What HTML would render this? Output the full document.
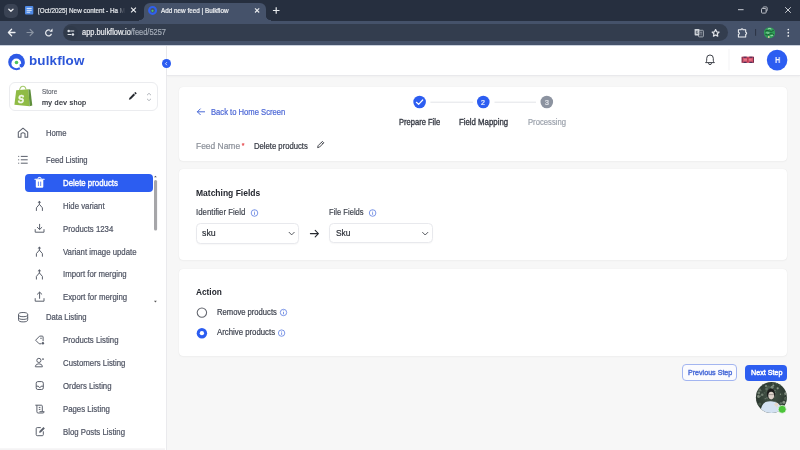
<!DOCTYPE html>
<html><head><meta charset="utf-8">
<style>
*{box-sizing:border-box;margin:0;padding:0}
html,body{width:800px;height:450px;overflow:hidden;background:#fff;font-family:"Liberation Sans",sans-serif}
.abs{position:absolute}
.t{position:absolute;white-space:nowrap;line-height:1;-webkit-font-smoothing:antialiased;will-change:transform}
.card{background:#fff;border-radius:4px;box-shadow:0 0 1px rgba(0,0,0,0.10),0 1px 2px rgba(0,0,0,0.03)}
</style></head><body>
<div class="abs" style="left:0;top:0;width:800px;height:21px;background:#262f3f"></div>
<div class="abs" style="left:4px;top:3.5px;width:14px;height:14px;border-radius:5px;background:#3a4354"></div>
<svg class="abs" style="left:0;top:0" width="800" height="45" viewBox="0 0 800 45"><path d="M8.8 9.2 L10.9 11.2 L13 9.2" fill="none" stroke="#e8eaed" stroke-width="1.3" stroke-linecap="round" stroke-linejoin="round"/><rect x="25" y="6" width="8.3" height="8.6" rx="1" fill="#4f8ae6"/><path d="M26.6 8.4h5.1M26.6 10.3h5.1M26.6 12.2h3.6" stroke="#e6eefc" stroke-width="0.95"/><path d="M131.1 7.6l4.8 4.8M135.9 7.6l-4.8 4.8" stroke="#eceef1" stroke-width="1.15"/></svg>
<div class="abs" style="left:144px;top:3px;width:122px;height:19px;border-radius:6px 6px 0 0;background:#45526a"></div>
<div class="abs" style="left:139px;top:15px;width:5px;height:6px;background:radial-gradient(circle at 0 0,#262f3f 5px,#45526a 5.5px)"></div>
<div class="abs" style="left:266px;top:15px;width:5px;height:6px;background:radial-gradient(circle at 100% 0,#262f3f 5px,#45526a 5.5px)"></div>
<div class="t" style="left:37.50px;top:7.92px;font-size:6.35px;color:#e3e6ea;font-weight:400;transform:scaleY(1.12);transform-origin:0 1px;-webkit-text-stroke:0.2px #e3e6ea"><span style="-webkit-mask-image:linear-gradient(90deg,#000 79px,rgba(0,0,0,0.25) 84px,transparent 88px);display:inline-block">[Oct/2025] New content - Ha M</span></div>

<div class="t" style="left:161.00px;top:7.92px;font-size:6.35px;color:#eef0f3;font-weight:400;transform:scaleY(1.12);transform-origin:0 1px;-webkit-text-stroke:0.2px #eef0f3">Add new feed | Bulkflow</div>

<svg class="abs" style="left:0;top:0" width="800" height="45" viewBox="0 0 800 45"><circle cx="152.6" cy="10.4" r="3.4" fill="none" stroke="#2f60ee" stroke-width="2.2"/><circle cx="152.5" cy="10.8" r="1.1" fill="#4cc86a"/><path d="M255 8.3l4.2 4.2M259.2 8.3l-4.2 4.2" stroke="#e8eaed" stroke-width="1.1"/><path d="M276.2 7.2v6.6M272.9 10.5h6.6" stroke="#e8eaed" stroke-width="1.2"/><path d="M738 9.7h5.6" stroke="#c9cdd4" stroke-width="1"/><rect x="761.5" y="8.5" width="4.6" height="4.6" rx="0.8" fill="none" stroke="#c9cdd4" stroke-width="0.9"/><path d="M763 8.3 v-0.6 a0.8 0.8 0 0 1 0.8-0.8 h2.4 a1 1 0 0 1 1 1 v2.4 a0.8 0.8 0 0 1 -0.8 0.8 h-0.4" fill="none" stroke="#c9cdd4" stroke-width="0.8"/><path d="M785.2 7.2l5.6 5.6M790.8 7.2l-5.6 5.6" stroke="#c9cdd4" stroke-width="1"/></svg>
<div class="abs" style="left:0;top:21px;width:800px;height:24px;background:#45526a"></div>
<div class="abs" style="left:62.5px;top:24.3px;width:665.5px;height:16.5px;border-radius:8.5px;background:#333d4e"></div>
<div class="abs" style="left:63.5px;top:25.5px;width:14px;height:14px;border-radius:7px;background:#303a4a"></div>
<div class="t" style="left:81.80px;top:29.29px;font-size:7.45px;color:#e9ebee;font-weight:400;transform:scaleY(1.1);transform-origin:0 1.2px;-webkit-text-stroke:0.2px #e9ebee">app.bulkflow.io<span style="color:#a3abb7;-webkit-text-stroke:0.2px #a3abb7">/feed/5257</span></div>

<svg class="abs" style="left:0;top:0" width="800" height="45" viewBox="0 0 800 45"><path d="M15 32.5H8.6M11.6 29.3L8.4 32.5L11.6 35.7" fill="none" stroke="#eef0f3" stroke-width="1.3" stroke-linecap="round" stroke-linejoin="round"/><path d="M27 32.5h6.2M30.1 29.4l3.1 3.1l-3.1 3.1" fill="none" stroke="#8a93a2" stroke-width="1.2" stroke-linecap="round" stroke-linejoin="round"/><path d="M50.1 30.3 A3 3 0 1 0 51.5 33.8" fill="none" stroke="#e6e9ee" stroke-width="1.2"/><path d="M49.4 31.7 L52.5 31.7 L52.5 28.6z" fill="#f2f4f7"/><path d="M70.2 31h4M67.6 34.5h3.8" stroke="#dfe3e8" stroke-width="1.1"/><circle cx="68.7" cy="31" r="1.25" fill="#dfe3e8"/><circle cx="72.9" cy="34.5" r="1.25" fill="#dfe3e8"/><rect x="698.4" y="30.3" width="5" height="6.6" rx="0.8" fill="#3a4352" stroke="#a9b0ba" stroke-width="0.9"/><rect x="694.6" y="28.9" width="4.8" height="6.6" rx="0.7" fill="#cfd3d9"/><path d="M697.8 31.2h-1.5v2.2h1.5v-1" fill="none" stroke="#3a4352" stroke-width="0.7"/><path d="M700 32.2h2.2M701.1 32.2v3.2" stroke="#a9b0ba" stroke-width="0.6"/><path d="M715.6 29.6l1.05 2.2 2.4 0.32-1.75 1.65 0.45 2.4-2.15-1.2-2.15 1.2 0.45-2.4-1.75-1.65 2.4-0.32z" fill="#2a3342" stroke="#e0e3e8" stroke-width="1.25" stroke-linejoin="round"/><path d="M738.4 29.8H741A1 1 0 0 1 743 29.8H745.7V32.3A1 1 0 0 1 745.7 34.3V37H738.4V34.3A1 1 0 0 0 738.4 32.3Z" fill="none" stroke="#eef0f3" stroke-width="1.05" stroke-linejoin="round"/><path d="M755.6 29v6.8" stroke="#283040" stroke-width="0.9"/><circle cx="769.5" cy="32.75" r="5.6" fill="#2f9e57"/><path d="M765 31.3q2.2-1.6 4.4-0.3t4.4-0.8M765.3 34.3q2.2 1.4 4.2-0.2t4.3 0.6" fill="none" stroke="#1b5a33" stroke-width="1"/><path d="M767.8 29q1.5-1 3.5 0M766.4 32.7q1.5 0.6 3 0.2M770.5 35.6q1.5 0.4 2.5-0.6" fill="none" stroke="#c8ead0" stroke-width="0.8"/><circle cx="768.8" cy="37" r="0.9" fill="#e8d0a0"/><circle cx="788.3" cy="29.5" r="0.85" fill="#eef0f3"/><circle cx="788.3" cy="32.7" r="0.85" fill="#eef0f3"/><circle cx="788.3" cy="35.9" r="0.85" fill="#eef0f3"/></svg>
<div class="abs" style="left:0;top:45px;width:800px;height:405px;background:#f7f7f7"></div>
<div class="abs" style="left:0;top:45px;width:167px;height:405px;background:#fff;border-right:1px solid #eaeaed"></div>
<div class="abs" style="left:167px;top:45px;width:633px;height:30.9px;background:#fff;border-bottom:1px solid #e9e9ec;box-shadow:0 1px 2px rgba(0,0,0,0.03)"></div>
<div class="abs" style="left:0;top:45px;width:800px;height:1px;background:#c9d0dc"></div>
<div class="abs card" style="left:178.7px;top:87.3px;width:608.6px;height:73.9px"></div>
<div class="abs card" style="left:178.7px;top:169.1px;width:608.6px;height:90.9px"></div>
<div class="abs card" style="left:178.7px;top:269px;width:608.6px;height:86.8px"></div>
<svg class="abs" style="left:0;top:45px" width="166" height="405" viewBox="0 45 166 405"><circle cx="16.5" cy="62" r="8.3" fill="#2e5ae6"/><circle cx="16.3" cy="63.4" r="4.9" fill="#fff"/><path d="M19.2 67.6 L21.6 70.2 L23.6 68.2 L21.2 66.2z" fill="#fff"/><path d="M19.6 64.6 Q22.5 62.8 24.8 62.6 Q24.2 66.2 21.4 67.8 Q19 66.8 19.6 64.6z" fill="#2e5ae6"/><circle cx="16.5" cy="62.5" r="1.8" fill="#4cc35e"/></svg>
<div class="t" style="left:29.40px;top:53.56px;font-size:13.4px;color:#2b55d8;font-weight:700;letter-spacing:0.15px">bulkflow</div>

<div class="abs" style="left:8.5px;top:82.2px;width:149.2px;height:28.6px;border:1px solid #ebecef;border-radius:6px;background:#fff"></div>
<svg class="abs" style="left:0;top:45px" width="166" height="405" viewBox="0 45 166 405"><path d="M16.2 90.2 L28.4 89.2 L29.6 106.3 L14.4 104.7 Z" fill="#8fbb45"/><path d="M28.4 89.2 L30.4 89.6 L32.3 105.6 L29.6 106.3 Z" fill="#5f8f3c"/><path d="M19.6 90.2 q0.6-4 3.4-4 q2.6 0 3 3.6" fill="none" stroke="#a4c96a" stroke-width="1.1"/><text x="0" y="0" transform="translate(17.4 102.8) scale(0.82 1) skewX(-8)" font-family="Liberation Sans" font-weight="700" font-size="11.5" fill="#f4f8ee" stroke="#f4f8ee" stroke-width="0.4">S</text><path d="M128.9 99.8 l0.45-1.9 l4.3-4.3 l1.45 1.45 l-4.3 4.3 z" fill="#262a30"/><path d="M134.2 93.1 l0.8-0.8 q0.35-0.35 0.7 0 l0.75 0.75 q0.35 0.35 0 0.7 l-0.8 0.8z" fill="#262a30"/><path d="M147 95.2 l2-1.9 l2 1.9 M147 98.8 l2 1.9 l2-1.9" fill="none" stroke="#9ea3ab" stroke-width="0.8"/></svg>
<div class="t" style="left:42.00px;top:88.58px;font-size:6.4px;color:#5d616b;font-weight:400;-webkit-text-stroke:0.12px #5d616b;transform:scaleY(1.08);transform-origin:0 1.01px">Store</div>

<div class="t" style="left:42.00px;top:98.62px;font-size:7.3px;color:#2a2e36;font-weight:400;letter-spacing:0.28px;noscale;-webkit-text-stroke:0.2px #2a2e36">my dev shop</div>

<div class="t" style="left:46.00px;top:129.92px;font-size:7.65px;color:#4f5463;font-weight:400;;-webkit-text-stroke:0.2px #4f5463;transform:scaleY(1.08);transform-origin:0 1.21px">Home</div>

<div class="t" style="left:46.00px;top:156.82px;font-size:7.65px;color:#4f5463;font-weight:400;;-webkit-text-stroke:0.2px #4f5463;transform:scaleY(1.08);transform-origin:0 1.21px">Feed Listing</div>

<div class="abs" style="left:24.9px;top:173.6px;width:128.1px;height:18.6px;border-radius:4px;background:#2c5df1"></div>
<div class="t" style="left:62.50px;top:179.95px;font-size:7.85px;color:#fff;font-weight:400;-webkit-text-stroke:0.35px #fff;transform:scaleY(1.08);transform-origin:0 1.24px">Delete products</div>

<div class="t" style="left:62.60px;top:202.80px;font-size:7.8px;color:#4f5463;font-weight:400;;-webkit-text-stroke:0.2px #4f5463;transform:scaleY(1.08);transform-origin:0 1.24px">Hide variant</div>

<div class="t" style="left:62.60px;top:225.65px;font-size:7.8px;color:#4f5463;font-weight:400;;-webkit-text-stroke:0.2px #4f5463;transform:scaleY(1.08);transform-origin:0 1.24px">Products 1234</div>

<div class="t" style="left:62.60px;top:248.50px;font-size:7.8px;color:#4f5463;font-weight:400;;-webkit-text-stroke:0.2px #4f5463;transform:scaleY(1.08);transform-origin:0 1.24px">Variant image update</div>

<div class="t" style="left:62.60px;top:271.35px;font-size:7.8px;color:#4f5463;font-weight:400;;-webkit-text-stroke:0.2px #4f5463;transform:scaleY(1.08);transform-origin:0 1.24px">Import for merging</div>

<div class="t" style="left:62.60px;top:294.20px;font-size:7.8px;color:#4f5463;font-weight:400;;-webkit-text-stroke:0.2px #4f5463;transform:scaleY(1.08);transform-origin:0 1.24px">Export for merging</div>

<div class="t" style="left:46.00px;top:314.38px;font-size:7.7px;color:#4f5463;font-weight:400;;-webkit-text-stroke:0.2px #4f5463;transform:scaleY(1.08);transform-origin:0 1.22px">Data Listing</div>

<div class="t" style="left:62.60px;top:337.30px;font-size:7.8px;color:#4f5463;font-weight:400;;-webkit-text-stroke:0.2px #4f5463;transform:scaleY(1.08);transform-origin:0 1.24px">Products Listing</div>

<div class="t" style="left:62.60px;top:360.20px;font-size:7.8px;color:#4f5463;font-weight:400;;-webkit-text-stroke:0.2px #4f5463;transform:scaleY(1.08);transform-origin:0 1.24px">Customers Listing</div>

<div class="t" style="left:62.60px;top:383.10px;font-size:7.8px;color:#4f5463;font-weight:400;;-webkit-text-stroke:0.2px #4f5463;transform:scaleY(1.08);transform-origin:0 1.24px">Orders Listing</div>

<div class="t" style="left:62.60px;top:406.00px;font-size:7.8px;color:#4f5463;font-weight:400;;-webkit-text-stroke:0.2px #4f5463;transform:scaleY(1.08);transform-origin:0 1.24px">Pages Listing</div>

<div class="t" style="left:62.60px;top:428.90px;font-size:7.8px;color:#4f5463;font-weight:400;;-webkit-text-stroke:0.2px #4f5463;transform:scaleY(1.08);transform-origin:0 1.24px">Blog Posts Listing</div>

<svg class="abs" style="left:0;top:45px" width="166" height="405" viewBox="0 45 166 405"><path d="M18.3 132.2 L23 128.2 L27.7 132.2 V137.3 H25 V133.6 Q23 132 21 133.6 V137.3 H18.3 Z" fill="none" stroke="#5b606c" stroke-width="1.05" stroke-linejoin="round"/><path d="M18.2 156.4h1M18.2 159.8h1M18.2 163.2h1M20.8 156.4h6.9M20.8 159.8h6.9M20.8 163.2h6.9" stroke="#5b606c" stroke-width="1"/><path d="M34.9 179.2h9.3" stroke="#fff" stroke-width="1.1" stroke-linecap="round"/><path d="M38.1 178.9v-0.6q0-0.9 0.9-0.9h1.1q0.9 0 0.9 0.9v0.6" fill="none" stroke="#fff" stroke-width="1"/><path d="M35.8 179.6h7.5v7.2q0 1-1 1h-5.5q-1 0-1-1z" fill="#fff"/><path d="M38.4 181.6v4.4M40.7 181.6v4.4" stroke="#2c5df1" stroke-width="0.75"/><g fill="none" stroke="#5b606c" stroke-width="1" stroke-linecap="round" stroke-linejoin="round"><path d="M39.4 201.6V204.3M36.4 210.5V207.8L39.4 204.3L42.4 207.8V210.5"/></g><path d="M37.6 202.7L39.4 200.7L41.2 202.7z" fill="#5b606c"/><g fill="none" stroke="#5b606c" stroke-width="1" stroke-linecap="round" stroke-linejoin="round"><path d="M39.6 224.3v5M37.4 227.4l2.2 2.1 2.2-2.1M35.2 229.6v2.6h8.8v-2.6"/></g><g fill="none" stroke="#5b606c" stroke-width="1" stroke-linecap="round" stroke-linejoin="round"><path d="M39.4 247.4V250.1M36.4 256.3V253.6L39.4 250.1L42.4 253.6V256.3"/></g><path d="M37.6 248.5L39.4 246.5L41.2 248.5z" fill="#5b606c"/><g fill="none" stroke="#5b606c" stroke-width="1" stroke-linecap="round" stroke-linejoin="round"><path d="M39.4 270.2V272.9M36.4 279.1V276.4L39.4 272.9L42.4 276.4V279.1"/></g><path d="M37.6 271.3L39.4 269.3L41.2 271.3z" fill="#5b606c"/><g fill="none" stroke="#5b606c" stroke-width="1" stroke-linecap="round" stroke-linejoin="round"><path d="M39.6 298.4v-6M37.4 294.2l2.2-2.1 2.2 2.1M35.2 298.6v2.6h8.8v-2.6"/></g><g fill="none" stroke="#5b606c" stroke-width="1"><ellipse cx="23.1" cy="314.6" rx="4.6" ry="2.1"/><path d="M18.5 314.6v5.2q0 2.1 4.6 2.1t4.6-2.1v-5.2M18.5 317.3q0 2.1 4.6 2.1t4.6-2.1"/></g><g fill="none" stroke="#5b606c" stroke-width="1" stroke-linejoin="round"><path d="M43.1 341.2V337q0-0.9-0.9-0.9h-2.6L35.6 340.2l3.6 3.6h2.2"/><circle cx="41" cy="338.2" r="0.35"/></g><circle cx="42.9" cy="343.3" r="1.2" fill="#5b606c"/><g fill="none" stroke="#5b606c" stroke-width="1"><circle cx="38.9" cy="360.4" r="2.1"/><path d="M35.4 366.8v-0.6q0.4-2.4 3.5-2.4t3.5 2.4v0.6z"/></g><circle cx="43" cy="359.1" r="0.9" fill="#5b606c"/><g fill="none" stroke="#5b606c" stroke-width="1" stroke-linejoin="round"><rect x="36.2" y="381.6" width="7.1" height="7.9" rx="1.6"/><path d="M36.2 386.2h2.1q0.5 1.3 1.45 1.3t1.45-1.3h2.1"/></g><g fill="none" stroke="#5b606c" stroke-width="1" stroke-linejoin="round"><path d="M35.3 405.2h6.1q0.9 0 0.9 0.9v5.4M36.9 405.2v6.6q0 1.2 1.2 1.2h4.8q1.1 0 1.3-1.3h-4.7"/><path d="M38.8 407.4h1.6M38.8 409.4h1.6"/></g><g fill="none" stroke="#5b606c" stroke-width="1" stroke-linejoin="round"><path d="M40.8 427.6h-3.6q-1 0-1 1v6.1q0 1 1 1h5.1q1 0 1-1v-3.4"/></g><path d="M39.1 432.8l0.4-1.7 4-4 1.3 1.3-4 4z" fill="#5b606c"/><rect x="154" y="180" width="3.1" height="50.6" rx="1.5" fill="#a6a6a9"/><path d="M154 177.3l1.4-1.6 1.4 1.6z" fill="#555"/><path d="M154 300.8l1.4 1.6 1.4-1.6z" fill="#555"/><rect x="0" y="448.3" width="165" height="1.7" fill="#f4f3f4"/></svg>
<div class="abs" style="left:161.9px;top:59.4px;width:8.8px;height:8.8px;border-radius:50%;background:#2c5df1"></div>
<svg class="abs" style="left:160px;top:57px" width="14" height="14" viewBox="160 57 14 14"><path d="M166.9 62.2l-1.4 1.5 1.4 1.5" fill="none" stroke="#fff" stroke-width="0.8"/></svg>
<svg class="abs" style="left:600px;top:45px" width="200" height="30" viewBox="600 45 200 30"><path d="M705.6 62.6 q1.1-0.6 1.1-2.4 v-1.9 a3.3 3.3 0 0 1 6.6 0 v1.9 q0 1.8 1.1 2.4 z" fill="none" stroke="#3d4048" stroke-width="1.0" stroke-linejoin="round"/><path d="M708.5 63.1 a1.5 1.5 0 0 0 3 0" fill="none" stroke="#3d4048" stroke-width="1"/><path d="M729 49v21.4" stroke="#f0f0f2" stroke-width="0.8"/><rect x="741.7" y="56.6" width="12.3" height="6.3" fill="#d9566e"/><path d="M743.4 57.2h3.3M749.3 57.2h3.3M743.4 62.3h3.3M749.3 62.3h3.3" stroke="#2c2550" stroke-width="1"/><path d="M742.2 57v5.6M753.5 57v5.6" stroke="#6a2a48" stroke-width="0.9"/><path d="M747.85 57.3v5" stroke="#b8344c" stroke-width="1.3"/><path d="M744 59.75h7.6" stroke="#e27a8c" stroke-width="1.6"/><path d="M747.85 58.8v2" stroke="#b02c44" stroke-width="1.3"/><circle cx="777.1" cy="60.1" r="10.3" fill="#2c5df1"/></svg>
<div class="t" style="left:774.50px;top:55.62px;font-size:8.6px;color:#f4f6fd;font-weight:700;transform:scaleX(0.86);transform-origin:0 0">H</div>

<svg class="abs" style="left:180px;top:88px" width="400" height="70" viewBox="180 88 400 70"><path d="M204.6 111.8h-7.2M200.3 108.9l-2.9 2.9 2.9 2.9" fill="none" stroke="#4a6ad6" stroke-width="1" stroke-linecap="round" stroke-linejoin="round"/><path d="M430.4 102.2h42.7M494.5 102.2h41.5" stroke="#e3e4e8" stroke-width="1"/><circle cx="419.6" cy="102.05" r="6.3" fill="#2c5df1"/><path d="M416.4 102.3l2.2 2 4.1-4.3" fill="none" stroke="#fff" stroke-width="1.2" stroke-linecap="round" stroke-linejoin="round"/><circle cx="483.3" cy="102.05" r="6.3" fill="#2c5df1"/><circle cx="546.8" cy="102.05" r="6.3" fill="#8c93a0"/><path d="M317.6 147.6l0.5-1.9 4.3-4.3 1.4 1.4-4.3 4.3z M321.4 142.4l1.4 1.4" fill="none" stroke="#35383f" stroke-width="0.9" stroke-linejoin="round"/></svg>
<div class="t" style="left:481.40px;top:98.77px;font-size:7.0px;color:#eef2fd;font-weight:400;-webkit-text-stroke:0.2px #eef2fd;noscale">2</div>

<div class="t" style="left:545.00px;top:98.77px;font-size:7.0px;color:#e4e7ec;font-weight:400;-webkit-text-stroke:0.2px #e4e7ec;noscale">3</div>

<div class="t" style="left:210.60px;top:108.52px;font-size:7.65px;color:#4d68d6;font-weight:400;;-webkit-text-stroke:0.2px #4d68d6;transform:scaleY(1.08);transform-origin:0 1.21px">Back to Home Screen</div>

<div class="t" style="left:398.80px;top:119.31px;font-size:7.55px;color:#363a44;font-weight:400;-webkit-text-stroke:0.3px #363a44;transform:scaleY(1.08);transform-origin:0 1.20px">Prepare File</div>

<div class="t" style="left:458.90px;top:119.08px;font-size:7.82px;color:#363a44;font-weight:400;-webkit-text-stroke:0.3px #363a44;transform:scaleY(1.08);transform-origin:0 1.24px">Field Mapping</div>

<div class="t" style="left:528.20px;top:119.20px;font-size:7.68px;color:#9ca2ac;font-weight:400;;-webkit-text-stroke:0.2px #9ca2ac;transform:scaleY(1.08);transform-origin:0 1.22px">Processing</div>

<div class="t" style="left:196.20px;top:141.95px;font-size:8.45px;color:#8b9099;font-weight:400;;-webkit-text-stroke:0.2px #8b9099;transform:scaleY(1.08);transform-origin:0 1.34px">Feed Name<span style="color:#e5484d;-webkit-text-stroke:0.2px #e5484d;margin-left:1.6px;font-size:7px;position:relative;top:-1px">*</span></div>

<div class="t" style="left:253.75px;top:142.98px;font-size:7.7px;color:#353943;font-weight:400;;-webkit-text-stroke:0.2px #353943;transform:scaleY(1.08);transform-origin:0 1.22px">Delete products</div>

<div class="t" style="left:195.90px;top:188.80px;font-size:8.5px;color:#23262e;font-weight:700;">Matching Fields</div>

<div class="t" style="left:195.90px;top:208.85px;font-size:7.85px;color:#393e49;font-weight:400;-webkit-text-stroke:0.15px #393e49;transform:scaleY(1.08);transform-origin:0 1.24px">Identifier Field</div>

<div class="t" style="left:329.40px;top:209.32px;font-size:7.6px;color:#393e49;font-weight:400;-webkit-text-stroke:0.15px #393e49;transform:scaleY(1.08);transform-origin:0 1.20px">File Fields</div>

<div class="abs" style="left:195.9px;top:223.2px;width:103.4px;height:20.8px;border:1px solid #e8e9ed;border-radius:4.5px;background:#fff;box-shadow:0 1px 1.5px rgba(0,0,0,0.03)"></div>
<div class="abs" style="left:329.4px;top:223.2px;width:103.6px;height:20.3px;border:1px solid #e8e9ed;border-radius:4.5px;background:#fff;box-shadow:0 1px 1.5px rgba(0,0,0,0.03)"></div>
<div class="t" style="left:202.40px;top:228.85px;font-size:8.8px;color:#2f333b;font-weight:400;;-webkit-text-stroke:0.2px #2f333b;transform:scaleY(1.08);transform-origin:0 1.39px">sku</div>

<div class="t" style="left:335.90px;top:229.29px;font-size:8.4px;color:#2f333b;font-weight:400;;-webkit-text-stroke:0.2px #2f333b;transform:scaleY(1.08);transform-origin:0 1.33px">Sku</div>

<svg class="abs" style="left:180px;top:200px" width="300" height="50" viewBox="180 200 300 50"><circle cx="254.5" cy="213" r="3.3" fill="none" stroke="#5b7be0" stroke-width="0.8"/><path d="M254.5 212.2v2.6" stroke="#5b7be0" stroke-width="0.8"/><circle cx="254.5" cy="211" r="0.45" fill="#5b7be0"/><circle cx="372.6" cy="213" r="3.3" fill="none" stroke="#5b7be0" stroke-width="0.8"/><path d="M372.6 212.2v2.6" stroke="#5b7be0" stroke-width="0.8"/><circle cx="372.6" cy="211" r="0.45" fill="#5b7be0"/><path d="M288.8 232l2.85 2.9 2.85-2.9" fill="none" stroke="#3a3d44" stroke-width="0.85"/><path d="M422.3 232.1l2.9 2.9 2.9-2.9" fill="none" stroke="#3a3d44" stroke-width="0.85"/><path d="M310.4 233.6h8M315.2 230.4l3.2 3.2-3.2 3.2" fill="none" stroke="#26292f" stroke-width="1.1" stroke-linecap="round" stroke-linejoin="round"/></svg>
<div class="t" style="left:196.10px;top:288.07px;font-size:8.3px;color:#23262e;font-weight:700;">Action</div>

<div class="t" style="left:216.70px;top:308.92px;font-size:7.65px;color:#3f4450;font-weight:400;;-webkit-text-stroke:0.2px #3f4450;transform:scaleY(1.08);transform-origin:0 1.21px">Remove products</div>

<div class="t" style="left:216.70px;top:329.40px;font-size:7.8px;color:#3f4450;font-weight:400;;-webkit-text-stroke:0.2px #3f4450;transform:scaleY(1.08);transform-origin:0 1.24px">Archive products</div>

<svg class="abs" style="left:180px;top:300px" width="300" height="50" viewBox="180 300 300 50"><circle cx="201.9" cy="312.6" r="4.7" fill="#fff" stroke="#63666e" stroke-width="1.05"/><circle cx="201.9" cy="333.2" r="5.2" fill="#2c5df1"/><circle cx="201.9" cy="333.2" r="2.15" fill="#fff"/><circle cx="283.5" cy="312.5" r="3.2" fill="none" stroke="#5b7be0" stroke-width="0.8"/><path d="M283.5 311.8v2.5" stroke="#5b7be0" stroke-width="0.8"/><circle cx="283.5" cy="310.6" r="0.45" fill="#5b7be0"/><circle cx="281.6" cy="333.1" r="3.2" fill="none" stroke="#5b7be0" stroke-width="0.8"/><path d="M281.6 332.4v2.5" stroke="#5b7be0" stroke-width="0.8"/><circle cx="281.6" cy="331.2" r="0.45" fill="#5b7be0"/></svg>
<div class="abs" style="left:682px;top:364.3px;width:55px;height:17.2px;border:1px solid #a3b5f0;border-radius:4px;background:#fbfbfe"></div>
<div class="abs" style="left:745.2px;top:364.7px;width:42.2px;height:16.1px;border-radius:4px;background:#2d5ef0"></div>
<div class="t" style="left:687.70px;top:370.27px;font-size:7.12px;color:#5070d9;font-weight:400;-webkit-text-stroke:0.42px #5070d9;transform:scaleY(1.1);transform-origin:0 1.1px;transform:scaleY(1.08);transform-origin:0 1.13px">Previous Step</div>

<div class="t" style="left:750.70px;top:370.23px;font-size:7.17px;color:#fff;font-weight:400;-webkit-text-stroke:0.42px #fff;transform:scaleY(1.1);transform-origin:0 1.1px;transform:scaleY(1.08);transform-origin:0 1.14px">Next Step</div>

<svg class="abs" style="left:750px;top:378px" width="45" height="40" viewBox="750 378 45 40"><defs><clipPath id="cp"><circle cx="771.4" cy="397.5" r="15.5"/></clipPath><radialGradient id="bg" cx="0.5" cy="0.45" r="0.6"><stop offset="0" stop-color="#46564a"/><stop offset="1" stop-color="#243028"/></radialGradient><filter id="bl"><feGaussianBlur stdDeviation="0.5"/></filter></defs><g clip-path="url(#cp)"><rect x="755" y="381" width="33" height="33" fill="url(#bg)"/><g filter="url(#bl)"><circle cx="766.0" cy="385.9" r="1.2" fill="#6f7e70"/><circle cx="781.5" cy="384.4" r="1.1" fill="#8a9688"/><circle cx="762.7" cy="384.2" r="1.0" fill="#5d6d60"/><circle cx="758.8" cy="393.0" r="1.4" fill="#6f7e70"/><circle cx="785.4" cy="398.4" r="1.1" fill="#6f7e70"/><circle cx="773.9" cy="392.3" r="1.6" fill="#6f7e70"/><circle cx="773.3" cy="385.5" r="1.0" fill="#8a9688"/><circle cx="759.7" cy="390.0" r="1.4" fill="#5d6d60"/><circle cx="759.2" cy="396.9" r="0.7" fill="#6f7e70"/><circle cx="773.0" cy="383.6" r="0.6" fill="#5d6d60"/><circle cx="771.4" cy="395.8" r="1.4" fill="#4a5a4c"/><circle cx="774.2" cy="393.8" r="0.8" fill="#5d6d60"/><circle cx="777.7" cy="388.3" r="1.1" fill="#8a9688"/><circle cx="771.3" cy="390.9" r="1.0" fill="#8a9688"/><circle cx="786.4" cy="385.1" r="1.0" fill="#7d8a7c"/><circle cx="760.7" cy="394.7" r="0.5" fill="#3a4a3c"/><circle cx="758.4" cy="396.5" r="1.4" fill="#7d8a7c"/><circle cx="766.5" cy="391.1" r="1.0" fill="#4a5a4c"/><circle cx="758.1" cy="384.4" r="0.8" fill="#3a4a3c"/><circle cx="776.6" cy="383.6" r="1.3" fill="#3a4a3c"/><circle cx="773.9" cy="399.7" r="1.0" fill="#3a4a3c"/><circle cx="768.0" cy="399.4" r="0.5" fill="#4a5a4c"/><circle cx="767.0" cy="397.9" r="1.0" fill="#5d6d60"/><circle cx="779.8" cy="385.4" r="0.8" fill="#4a5a4c"/><circle cx="784.4" cy="394.9" r="0.7" fill="#4a5a4c"/><circle cx="773.0" cy="405.0" r="1.4" fill="#8a9688"/><circle cx="764.6" cy="392.8" r="0.9" fill="#4a5a4c"/><circle cx="785.7" cy="385.9" r="0.7" fill="#5d6d60"/><circle cx="776.4" cy="382.3" r="1.4" fill="#5d6d60"/><circle cx="764.1" cy="382.1" r="1.0" fill="#7d8a7c"/><circle cx="774.9" cy="390.3" r="0.6" fill="#8a9688"/><circle cx="785.5" cy="399.0" r="1.3" fill="#4a5a4c"/><circle cx="783.9" cy="402.3" r="1.5" fill="#8a9688"/><circle cx="768.2" cy="392.4" r="0.6" fill="#3a4a3c"/><circle cx="768.4" cy="387.0" r="1.6" fill="#4a5a4c"/><circle cx="761.0" cy="390.8" r="0.6" fill="#6f7e70"/><circle cx="773.6" cy="396.0" r="1.5" fill="#8a9688"/><circle cx="756.8" cy="404.7" r="1.2" fill="#5d6d60"/><circle cx="775.7" cy="406.8" r="1.2" fill="#4a5a4c"/><circle cx="759.8" cy="404.1" r="1.6" fill="#4a5a4c"/><circle cx="770.9" cy="390.1" r="0.7" fill="#3a4a3c"/><circle cx="766.6" cy="388.9" r="1.4" fill="#5d6d60"/><circle cx="772.0" cy="387.3" r="1.5" fill="#7d8a7c"/><circle cx="760.5" cy="396.1" r="0.5" fill="#8a9688"/><circle cx="765.2" cy="398.7" r="0.6" fill="#7d8a7c"/><circle cx="772.1" cy="405.6" r="0.9" fill="#5d6d60"/><circle cx="772.5" cy="402.3" r="0.9" fill="#5d6d60"/><circle cx="775.0" cy="402.5" r="1.3" fill="#5d6d60"/><circle cx="781.0" cy="403.3" r="1.3" fill="#5d6d60"/><circle cx="762.2" cy="394.8" r="1.3" fill="#6f7e70"/><circle cx="780.5" cy="394.3" r="0.7" fill="#8a9688"/><circle cx="785.7" cy="393.6" r="1.5" fill="#7d8a7c"/><circle cx="785.6" cy="391.5" r="0.7" fill="#5d6d60"/><circle cx="770.6" cy="390.8" r="1.0" fill="#8a9688"/><circle cx="782.1" cy="394.5" r="1.2" fill="#3a4a3c"/><path d="M760 414 q0.8-9.5 5.5-12 q3-1 5.5-0.8 q3 0 6 1.5 q5 3 6 11.3 z" fill="#d4e2f2"/><ellipse cx="771" cy="394" rx="4.1" ry="5.6" fill="#1b1e1c"/><ellipse cx="771.2" cy="395.6" rx="2.9" ry="3.8" fill="#ddd2ca"/><path d="M768.2 394.6h6" stroke="#6a6460" stroke-width="0.5"/><path d="M774 404.5 q2.5-3 4.5-0.5 l-1.5 3.5z" fill="#e6d8cc"/></g></g><circle cx="782.2" cy="409.3" r="4" fill="#4cc43a" stroke="#f4f6f4" stroke-width="0.7"/></svg>
</body></html>
